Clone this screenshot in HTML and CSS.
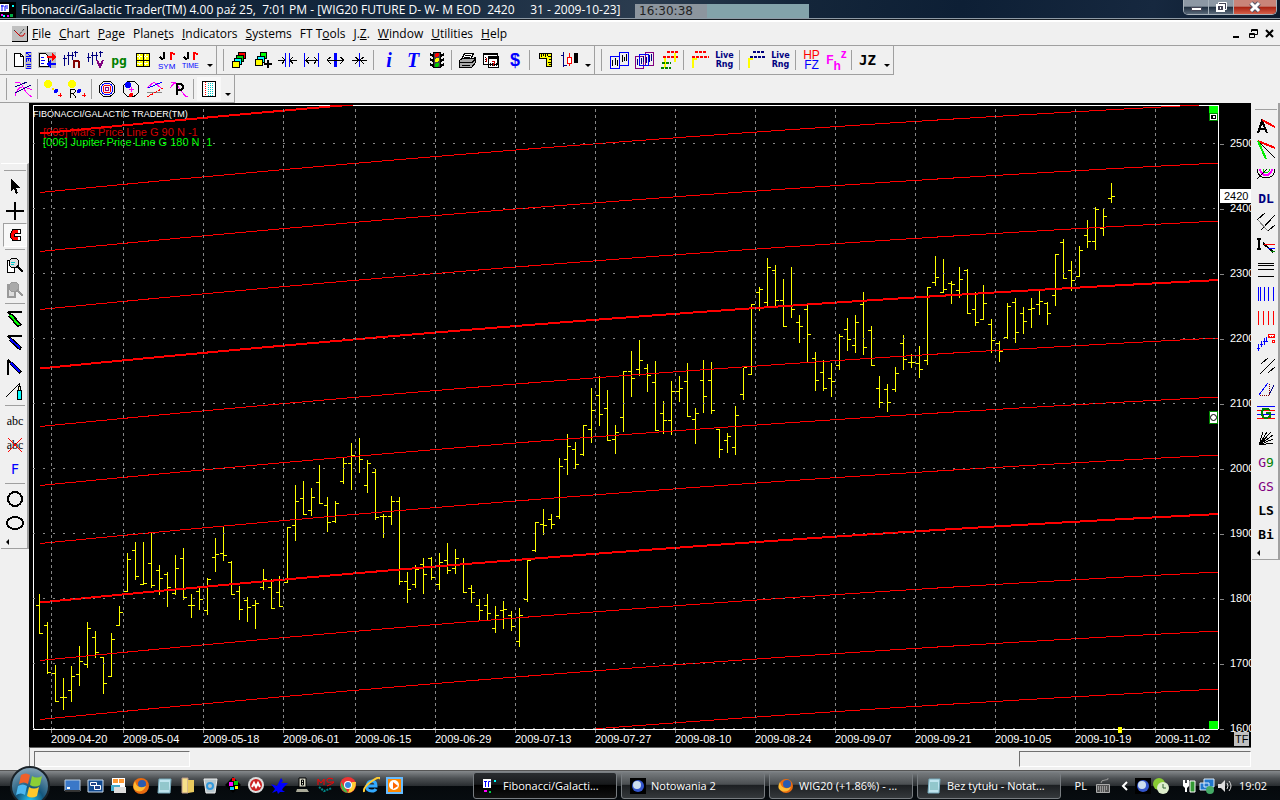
FILE: index.html
```html
<!DOCTYPE html>
<html lang="en">
<head>
  <meta charset="UTF-8" />
  <meta name="viewport" content="width=device-width, initial-scale=1.0"/>
  <title>Fibonacci/Galactic Trader(TM) 4.00</title>
  <link rel="stylesheet" href="styles.css">
</head>
<body>

<header class="titlebar">
  <svg class="app-icon" viewBox="0 0 16 16"><path fill="#000" d="M0 0h16v16H0z"/><path fill="#fff" d="M0 2h9v8H0z"/><path d="M1 4h3M2 3v6M5 9V4h3M6 6h2" stroke="#00f" stroke-width="1" fill="none"/><path fill="#0ff" d="M12 3h2v2h-2zM3 13h2v2H3z"/><path fill="#f0f" d="M1 12h2v2H1zM7 13h2v2H7z"/><path fill="#0a4" d="M10 12h3v3h-3z"/></svg>
  <h1>Fibonacci/Galactic Trader(TM) 4.00 paź 25,&nbsp; 7:01 PM - [WIG20 FUTURE D- W- M EOD&nbsp; 2420 &nbsp; &nbsp; 31 - 2009-10-23]</h1>
  <span class="timer">16:30:38</span>
  <div class="window-buttons">
    <button aria-label="Minimize"><svg viewBox="0 0 16 14"><path fill="#fff" stroke="#445" d="M3.500 7.500h10v3h-10z"/></svg></button>
    <button aria-label="Restore"><svg viewBox="0 0 16 14"><path fill="#445" stroke="#fff" d="M5.500 2.500h8v7h-8z"/><path fill="#445" stroke="#fff" stroke-width="2" d="M4 5h7v6H4z"/><path fill="#fff" d="M7 7h1v2H7z"/></svg></button>
    <button class="close" aria-label="Close"><svg viewBox="0 0 16 14"><path stroke="#556" stroke-width="5" d="M4 3l8 8M12 3l-8 8"/><path stroke="#fff" stroke-width="3" d="M4 3l8 8M12 3l-8 8"/></svg></button>
  </div>
</header>

<nav class="menubar">
  <svg class="doc-icon" viewBox="0 0 16 16"><path fill="#c0c0c0" d="M0 0h16v16H0z"/><path d="M0 15.500h15.500V0" stroke="#000" fill="none"/><path d="M2 4l5 5 5-6" stroke="#000" fill="none" stroke-dasharray="1 1"/><path d="M3 5l5 5 3 0 2 -3" stroke="#c00" fill="none"/></svg>
  <a href="#"><u>F</u>ile</a>
  <a href="#"><u>C</u>hart</a>
  <a href="#"><u>P</u>age</a>
  <a href="#">Plane<u>t</u>s</a>
  <a href="#"><u>I</u>ndicators</a>
  <a href="#"><u>S</u>ystems</a>
  <a href="#">FT T<u>o</u>ols</a>
  <a href="#">J.<u>Z</u>.</a>
  <a href="#"><u>W</u>indow</a>
  <a href="#"><u>U</u>tilities</a>
  <a href="#"><u>H</u>elp</a>
  <div class="child-buttons">
    <button aria-label="Minimize chart"><svg viewBox="0 0 10 10"><path fill="#000" d="M2 7h6v2H2z"/></svg></button>
    <button aria-label="Restore chart"><svg viewBox="0 0 10 10"><path fill="none" stroke="#000" d="M3.500 3V.5h6v5H7M1.500 4.500h5v4h-5zM3 1.500h6M1 5.500h6"/></svg></button>
    <button aria-label="Close chart"><svg viewBox="0 0 10 10"><path stroke="#000" stroke-width="2" d="M1 1l7 7M8 1L1 8"/></svg></button>
  </div>
</nav>

<div class="toolbars">
  <div class="toolbar">
    <button aria-label="New chart"><svg viewBox="0 0 20 20"><path fill="#c0c0c0" d="M12 2h7v17h-7z"/><path d="M1.500 3.500h6l3 3v10h-9zM7.500 3.500v3h3" fill="#fff" stroke="#000"/><path d="M13 6.500h5M13 2.500h5M13 3l5 3M13.500 8v4M15.500 8v3M17.500 8v4M13 8.500h5M13 14.500h5M13 18.500h5M14 16.500h4" fill="none" stroke="#00f"/></svg></button>
    <button aria-label="Replace chart"><svg viewBox="0 0 20 20"><path fill="#c0c0c0" d="M1 2h18v16H1z"/><path d="M2.500 3.500h6l3 3v10h-9z" fill="#fff" stroke="#000"/><path d="M4 7.500h3M4 10.500h4M4 13.500h3" stroke="#00f"/><path fill="red" d="M10 6h5V3l5 4-5 4V8h-5z"/><path fill="#00f" d="M19 13h-5v-3l-5 4 5 4v-3h5z"/></svg></button>
    <button aria-label="Bars n"><svg viewBox="0 0 20 20"><path d="M3.500 5v11M2 8.500h4M7.500 2v13M6 5.500h4M11.500 2v8M10 5.500h3M14.500 1v6M13 2.500h4" stroke="#000080" fill="none"/><path d="M13 18v-8M13 11h4q1 0 1 2v5" stroke="#800000" stroke-width="2" fill="none"/></svg></button>
    <button aria-label="Bars v"><svg viewBox="0 0 20 20"><path d="M3.500 3v9M2 7.500h4M7.500 2v13M6 5.500h4M11.500 2v8M10 5.500h3M15.500 1v6M14 2.500h4" stroke="#000080" fill="none"/><path d="M12 10l3 7 3-7" stroke="#800080" stroke-width="2" fill="none"/></svg></button>
    <button class="glyph pg">pg</button>
    <button aria-label="Grid"><svg viewBox="0 0 20 20"><path fill="#ff0" stroke="#000" d="M3.500 3.500h13v13h-13z"/><path stroke="#fff" stroke-dasharray="2 1" d="M6.500 4v12M12.500 4v12M4 6.500h12M4 13.500h12"/><path stroke="#000" d="M10.500 4v12M4 10.500h12"/></svg></button>
    <button aria-label="Symbol"><svg viewBox="0 0 20 20"><path d="M7 2v7M3 7l3 3" stroke="#000" stroke-width="2"/><path d="M14 10V3l4 1" stroke="red" stroke-width="2" fill="none"/><text x="1" y="19" fill="#00f">SYM</text></svg></button>
    <button aria-label="Time"><svg viewBox="0 0 20 20"><path d="M7 2v7M3 7l3 3" stroke="#000" stroke-width="2"/><path d="M13 10V3l4 1" stroke="red" stroke-width="2" fill="none"/><text x="1" y="18" fill="#00f" class="tiny">TIME</text></svg></button>
    <button class="more" aria-label="More"></button>
  </div>

  <div class="toolbar">
    <button aria-label="Stack"><svg viewBox="0 0 20 20"><path fill="red" stroke="#000" d="M9.500 2.500h7v6h-7z"/><path fill="#0c0" stroke="#000" d="M7.500 5.500h7v6h-7z"/><path fill="#0ff" stroke="#000" d="M5.500 8.500h7v6h-7z"/><path fill="#ff0" stroke="#000" d="M3.500 11.500h7v6h-7z"/></svg></button>
    <button aria-label="Add to stack"><svg viewBox="0 0 20 20"><path fill="#0f0" stroke="#000" d="M7.500 2.500h6v6h-6z"/><path fill="#0ff" stroke="#000" d="M4.500 6.500h7v6h-7z"/><path fill="#ff0" stroke="#000" d="M2.500 9.500h7v6h-7z"/><path d="M15 10v8M11 14h8" stroke="#000" stroke-width="2"/></svg></button>
    <button aria-label="Compress"><svg viewBox="0 0 20 20"><path d="M8.500 3v14M12.500 3v14" stroke="#00f"/><path d="M1 10.500h7M5 7l3 3-3 4M20 10.500h-7M16 7l-3 3 3 4" stroke="#000" fill="none"/></svg></button>
    <button aria-label="Expand"><svg viewBox="0 0 20 20"><path d="M3.500 3v14M17.500 3v14" stroke="#00f"/><path d="M4 10.500h13M8 7l-3 3 3 4M13 7l3 3-3 4" stroke="#000" fill="none"/></svg></button>
    <button aria-label="Widen"><svg viewBox="0 0 20 20"><path d="M10 3v14" stroke="#00f" stroke-width="3"/><path d="M2 10.500h17M6 7l-4 3 4 4M15 7l4 3-4 4" stroke="#000" fill="none"/></svg></button>
    <button aria-label="Narrow"><svg viewBox="0 0 20 20"><path d="M10.500 3v14" stroke="#00f"/><path d="M3 10.500h15M6 7l4 3-4 4M15 7l-4 3 4 4" stroke="#000" fill="none"/></svg></button>
    <i class="sep"></i>
    <button class="glyph serif" aria-label="Info">i</button>
    <button class="glyph serif" aria-label="Text">T</button>
    <button aria-label="Traffic light"><svg viewBox="0 0 20 20"><path fill="#444" stroke="#000" d="M6.500 2.500h7v15h-7z"/><path d="M3 4l3 2M17 4l-3 2M3 9l3 2M17 9l-3 2M3 14l3 2M17 14l-3 2" stroke="#000" stroke-width="2"/><circle cx="10" cy="5" r="2" fill="red"/><circle cx="10" cy="10" r="2" fill="#ff0"/><circle cx="10" cy="15" r="2" fill="#0c0"/></svg></button>
    <i class="sep"></i>
    <button aria-label="Print"><svg viewBox="0 0 20 20"><path fill="#fff" stroke="#000" d="M7.500 3.500h9l-3 6h-9z"/><path d="M8 5.500h6M7 7.500h6" stroke="#000"/><path fill="#aaa" stroke="#000" d="M2.500 10.500l3-2h11l2-1v5l-4 5h-12z"/><path d="M3 12.500h12l3-3M5 15.500h8" stroke="#000" fill="none"/></svg></button>
    <button aria-label="Calendar"><svg viewBox="0 0 20 20"><path fill="#fff" stroke="#000" d="M2.500 3.500h14v11h-14zM7.500 6.500h10v11h-10z"/><path d="M2 4h15M7 8h11" stroke="#000" stroke-width="2"/><path d="M4.500 7v6M9 15.500h7M9 13.500h7" stroke="#000" stroke-dasharray="1 1"/><path d="M5 8v4M11 11h3l-2 5" stroke="#c00" fill="none"/></svg></button>
    <button class="glyph dollar">$</button>
    <i class="sep"></i>
    <button aria-label="Ruler"><svg viewBox="0 0 20 20"><path fill="#ff0" stroke="#000" d="M4.500 3.500h12v13h-5v-8h-7z"/><path d="M6.500 4v3M8.500 4v2M10.500 4v3M12.500 4v2M16 6.500h-3M16 9.500h-2M16 12.500h-3M16 14.500h-2" stroke="#000"/></svg></button>
    <button aria-label="Candles"><svg viewBox="0 0 20 20"><path d="M4.500 2v15M2 5.500h3M5 15.500h3" stroke="#000080"/><path d="M10.500 3v13" stroke="red"/><path fill="#fff" stroke="red" d="M8.500 7.500h4v6h-4z"/><path fill="#000" d="M15 3h4v10h-4z"/></svg></button>
    <button class="more" aria-label="More"></button>
  </div>

  <div class="toolbar wide">
    <button aria-label="Two charts"><svg viewBox="0 0 20 20"><path fill="none" stroke="#00f" d="M1.500 6.500h9v12h-9zM10.500 2.500h9v13h-9z"/><path d="M3.500 10v6M6.500 8v7M8.500 10v6M13.500 5v7M15.500 7v4M17.500 4v7" stroke="#000"/></svg></button>
    <button aria-label="Three charts"><svg viewBox="0 0 20 20"><path fill="none" stroke="#800080" d="M1.500 6.500h8v12h-8zM11.500 2.500h8v13h-8z"/><path fill="none" stroke="#00f" d="M5.500 4.500h9v11h-9z"/><path d="M3.500 9v6M7.500 8v6M9.500 6v6M12.500 7v6M15.500 5v7M17.500 4v7" stroke="#000080"/></svg></button>
    <button aria-label="Levels"><svg viewBox="0 0 20 20"><path d="M8 2h11M4 7h15" stroke="red" stroke-width="2" stroke-dasharray="3 1"/><path d="M16 3v9M6 8v10" stroke="#ff0" stroke-width="2"/><path d="M3 13h9M2 18h10" stroke="green" stroke-width="2" stroke-dasharray="3 1"/></svg></button>
    <i class="sep"></i>
    <button aria-label="Red levels"><svg viewBox="0 0 20 20"><path d="M5 2h12M2 7h17" stroke="red" stroke-width="2" stroke-dasharray="3 1"/><path d="M3 18V9h4" stroke="#ff0" stroke-width="2" fill="none"/></svg></button>
    <button class="glyph live">Live<br>Rng</button>
    <i class="sep"></i>
    <button aria-label="Blue levels"><svg viewBox="0 0 20 20"><path d="M7 2h12M4 7h15" stroke="#000080" stroke-width="2" stroke-dasharray="3 1"/><path d="M3 18V9h4" stroke="#ff0" stroke-width="2" fill="none"/></svg></button>
    <button class="glyph live">Live<br>Rng</button>
    <i class="sep"></i>
    <button class="glyph hpfz"><span>HP</span>FZ</button>
    <button class="glyph fhz">F<sub>h</sub><sup>z</sup></button>
    <i class="sep"></i>
    <button class="glyph jz">JZ</button>
    <button class="more" aria-label="More"></button>
  </div>
</div>

<div class="toolbars second">
  <div class="toolbar">
    <button aria-label="Planet lines"><svg viewBox="0 0 20 20"><path d="M2 4q5-3 8 4t9 10M2 17q3-10 8-9t9 3" stroke="#f0f" fill="none"/><path d="M2 8l12-5M2 14l16-8" stroke="#000080"/></svg></button>
    <i class="sep"></i>
    <button aria-label="Sun planets"><svg viewBox="0 0 20 20"><circle cx="5" cy="5" r="4" fill="#ff0"/><circle cx="10" cy="10" r="1" fill="#fd0"/><circle cx="13" cy="12" r="2" fill="#00f"/><path d="M17.500 14v4M15 16.500h4" stroke="red"/></svg></button>
    <button aria-label="Retrograde"><svg viewBox="0 0 20 20"><circle cx="5" cy="5" r="4" fill="#ff0"/><circle cx="12" cy="12" r="2" fill="#00f"/><path d="M17.500 14v4M15 16.500h4" stroke="red"/><path d="M3 19V10h4q3 2 0 4H3M6 14l3 5" stroke="#000" fill="none"/></svg></button>
    <i class="sep"></i>
    <button aria-label="Orbits"><svg viewBox="0 0 20 20"><g fill="none"><circle cx="10" cy="10" r="8" stroke="#000"/><circle cx="10" cy="10" r="6" stroke="#00f"/><circle cx="10" cy="10" r="4" stroke="red"/><circle cx="10" cy="10" r="2" stroke="#808"/></g></svg></button>
    <button aria-label="Wheel"><svg viewBox="0 0 20 20"><circle cx="10" cy="10" r="8" fill="#f0f0f0" stroke="#000"/><circle cx="7" cy="6" r="3" fill="#00f"/><circle cx="10" cy="16" r="2" fill="red"/><path d="M10.500 8v5M8 10.500h5" stroke="#f0f"/></svg></button>
    <button aria-label="Aspects"><svg viewBox="0 0 20 20"><path d="M2 9l7-6 7 6" stroke="#f0f" fill="none"/><path d="M3 9l14-6" stroke="#00f"/><path d="M2 13h15" stroke="#888"/><path d="M2 18l9-5 7-4" stroke="red" stroke-dasharray="3 1"/></svg></button>
    <button aria-label="Planet path"><svg viewBox="0 0 20 20"><path d="M1 9l5-6 4 6 4 5q3 5 5 3M2 3l8 3" stroke="#f0f" fill="none"/><path d="M8 16V5h4q4 3 0 6H8" stroke="#000" stroke-width="2" fill="none"/></svg></button>
    <i class="sep"></i>
    <button class="pressed" aria-label="Ephemeris"><svg viewBox="0 0 20 20"><path fill="#fff" stroke="#000" d="M3.500 2.500h13v15h-13z"/><path d="M6.500 3v14" stroke="red" stroke-dasharray="1 1"/><path d="M9.500 4v13M11.500 4v13M13.500 4v13" stroke="#0cc" stroke-dasharray="1 1"/></svg></button>
    <button class="more" aria-label="More"></button>
  </div>
</div>

<main>
  <aside class="dock left">
    <button aria-label="Pointer"><svg viewBox="0 0 20 20"><path fill="#000" d="M6 2v12l3-3 2 6 2-1-2-5h4z"/></svg></button>
    <button aria-label="Crosshair"><svg viewBox="0 0 20 20"><path d="M10 1v18M1 10h18" stroke="#000" stroke-width="2"/></svg></button>
    <button class="pressed" aria-label="Magnet"><svg viewBox="0 0 20 20"><path d="M16 6.500H9q-3 4 0 7h7" fill="none" stroke="#000" stroke-width="5"/><path d="M13 6.500H9q-3 4 0 7h4" fill="none" stroke="red" stroke-width="3"/><path d="M13 6.500h2M13 13.500h2" stroke="#fff" stroke-width="3"/></svg></button>
    <i class="sep"></i>
    <button aria-label="Zoom in"><svg viewBox="0 0 20 20"><path fill="#fff" stroke="#000" d="M2.500 5.500h7v12h-7z"/><circle cx="9" cy="8" r="5" fill="#ddd" stroke="#000"/><path d="M6 7.500h4M6 9.500h3" stroke="#0cc"/><path d="M12 11l6 6" stroke="#000" stroke-width="2"/></svg></button>
    <button aria-label="Zoom out" disabled><svg viewBox="0 0 20 20"><path fill="#ddd" stroke="#999" stroke-width="2" d="M2.500 5.500h7v12h-7z"/><circle cx="9" cy="8" r="5" fill="#aaa" stroke="#999"/><path d="M12 11l6 6" stroke="#999" stroke-width="2"/></svg></button>
    <i class="sep"></i>
    <button aria-label="Green line"><svg viewBox="0 0 20 20"><path d="M3 3h14M3 3l12 13" stroke="#000" stroke-width="2"/><path d="M5 6l10 11" stroke="#000" stroke-width="5"/><path d="M5 6l9 10" stroke="#0f0" stroke-width="2"/></svg></button>
    <button aria-label="Blue line"><svg viewBox="0 0 20 20"><path d="M3 3h14M3 3l12 13" stroke="#000" stroke-width="2"/><path d="M5 6l11 10" stroke="#000" stroke-width="4"/><path d="M5 6l10 9" stroke="#00f" stroke-width="2"/></svg></button>
    <button aria-label="Vertical line"><svg viewBox="0 0 20 20"><path d="M3 3v15M3 3l12 12" stroke="#000" stroke-width="2"/><path d="M6 6l10 10" stroke="#000" stroke-width="4"/><path d="M6 6l9 9" stroke="#00f" stroke-width="2"/></svg></button>
    <button aria-label="Marker"><svg viewBox="0 0 20 20"><path d="M1 16L14 3v6" stroke="#000" fill="none"/><path fill="#0ff" stroke="#000" d="M12.500 9.500h4v9h-4z"/><path fill="#ffc" stroke="#000" d="M13.500 5.500h2v4h-2z"/></svg></button>
    <i class="sep"></i>
    <button class="glyph abc">abc</button>
    <button class="glyph abc crossed">abc<svg viewBox="0 0 20 20"><path d="M3 3l14 14M17 3L3 17" stroke="red"/></svg></button>
    <button class="glyph letter-f">F</button>
    <i class="sep"></i>
    <button aria-label="Circle"><svg viewBox="0 0 20 20"><circle cx="10" cy="10" r="7" fill="none" stroke="#000" stroke-width="2"/></svg></button>
    <button aria-label="Ellipse"><svg viewBox="0 0 20 20"><ellipse cx="10" cy="10" rx="8" ry="6" fill="none" stroke="#000" stroke-width="2"/></svg></button>
    <button class="more" aria-label="More"></button>
  </aside>

  <div class="workspace">
    <svg id="chart" role="img" aria-label="WIG20 FUTURE daily chart"></svg>
    <footer class="statusbar">
      <div class="field short"></div>
      <div class="field long"></div>
    </footer>
  </div>

  <aside class="dock right">
    <button aria-label="Angle A"><svg viewBox="0 0 20 20"><path d="M2 17l4-12 5 12M4 13h6" stroke="#000" stroke-width="2" fill="none"/><path d="M6 4l13 7" stroke="red" stroke-width="2"/></svg></button>
    <button aria-label="Fan"><svg viewBox="0 0 20 20"><path d="M2 1l17 7" stroke="red" stroke-width="2"/><path d="M2 1l17 17" stroke="#000"/><path d="M2 1l8 18" stroke="#0e0" stroke-width="2"/></svg></button>
    <button aria-label="Arcs"><svg viewBox="0 0 20 20"><g fill="none"><path d="M1 5q1 9 9 9t9-9" stroke="#000"/><path d="M4 5q1 6 6 6t6-6" stroke="#f0f" stroke-width="2"/><path d="M7 5q1 4 3 4t4-4" stroke="#0c0"/></g><path d="M1 15L11 5" stroke="#000"/></svg></button>
    <button class="glyph dl">DL</button>
    <button aria-label="Pitchfork"><svg viewBox="0 0 20 20"><path d="M1 8l8-7M5 18L19 3M12 19l7-6" stroke="#000"/><path d="M2 8l10 11" stroke="#888"/></svg></button>
    <button aria-label="I fan"><svg viewBox="0 0 20 20"><path d="M1 3h4M3 3v10M1 13h4M7 7l10 9" stroke="#000" stroke-width="2"/><path d="M8 8.500h11" stroke="red"/><path d="M12 12.500h7" stroke="#00f"/><path d="M15 15.500h4" stroke="#080"/></svg></button>
    <button aria-label="Horizontal lines"><svg viewBox="0 0 20 20"><path d="M2 3.500h16M2 5.500h16M2 9.500h16M2 16.500h16" stroke="#000"/></svg></button>
    <button aria-label="Blue cycles"><svg viewBox="0 0 20 20"><path d="M2.500 3v14M4.500 3v14M8.500 3v14M12.500 3v14M17.500 3v14" stroke="#00f"/></svg></button>
    <button aria-label="Red cycles"><svg viewBox="0 0 20 20"><path d="M2.500 3v14M7.500 3v14M12.500 3v14M17.500 3v14" stroke="red"/></svg></button>
    <button aria-label="Swing"><svg viewBox="0 0 20 20"><path d="M2.500 12v7M5.500 9v6M8.500 6v7M10.500 5v5M1 16.500h3M4 12.500h3M7 9.500h5" stroke="#00f"/><path fill="#fff" stroke="red" d="M12.500 2.500h6v3h-6zM16.500 8.500h2v2h-2z"/><path stroke="red" d="M13 4h5" stroke-dasharray="1 1"/></svg></button>
    <button aria-label="Parallel lines"><svg viewBox="0 0 20 20"><path d="M5 8l7-6M4 18L19 3M12 17l7-6" stroke="#000"/></svg></button>
    <button aria-label="Triangle"><svg viewBox="0 0 20 20"><path d="M3 15L12 3" stroke="#00f"/><path d="M13 15l5-10" stroke="#000080"/><path d="M4 15.500h9V3" stroke="#800000" stroke-dasharray="1 1" fill="none"/></svg></button>
    <button aria-label="G levels"><svg viewBox="0 0 20 20"><path d="M1 2.500h18M1 10.500h18" stroke="#00f"/><path d="M1 6.500h18M1 14.500h18" stroke="red"/><path d="M14 6q-8-4-8 3t8 4v-4h-4" stroke="green" stroke-width="2" fill="none"/></svg></button>
    <button aria-label="Rays"><svg viewBox="0 0 20 20"><path d="M3 17L7 4M3 17l8-13M3 17L15 4M3 17L17 7M3 17l14-6M3 17l14-2" stroke="#000"/></svg></button>
    <button class="glyph g9">G<span>9</span></button>
    <button class="glyph g9">GS</button>
    <button class="glyph ls">LS</button>
    <button class="glyph ls">Bi</button>
    <button class="more" aria-label="More"></button>
  </aside>
</main>

<div class="taskbar">
  <button class="start" aria-label="Start"><svg viewBox="0 0 40 40"><defs><radialGradient id="orb" cx="50%" cy="90%" r="90%"><stop offset="0" stop-color="#1fc8f8"/><stop offset=".4" stop-color="#14567c"/><stop offset="1" stop-color="#8aa6b8"/></radialGradient></defs><circle cx="20" cy="20" r="19" fill="url(#orb)" stroke="#1a2228" stroke-width="2"/><path fill="#f0602a" d="M11 9q5-3 9 0l-2 9q-4-3-9 0z"/><path fill="#8ccf35" d="M22 10q5 3 10 0l-2 9q-5 3-10 0z"/><path fill="#4db8f0" d="M8 20q5-3 9 0l-2 9q-4-3-9 0z"/><path fill="#fdc82c" d="M19 21q5 3 10 0l-2 9q-5 3-10 0z"/></svg></button>

  <div class="quick">
    <a href="#" aria-label="Show desktop"><svg viewBox="0 0 17 17"><path fill="#3b78c8" stroke="#bcd" d="M1 3h15v11H1z"/><path fill="#fff" d="M3 10h3v2H3z"/><path fill="#333" d="M1 13h15v2H1z"/></svg></a>
    <a href="#" aria-label="Switch windows"><svg viewBox="0 0 17 17"><path fill="#124a90" stroke="#cde" d="M1 3h15v12H1z"/><path fill="#248" stroke="#fff" d="M3.500 5.500h6v3h-6zM7.500 8.500h6v4h-6z"/></svg></a>
    <a href="#" aria-label="Mail"><svg viewBox="0 0 17 17"><path fill="#fff" d="M2 1h13v10H2z"/><path fill="#f93" d="M3 2h5v4H3zM9 2h5v4H9z"/><path fill="#4ac" d="M1 8h9v6H1z"/><path fill="#ddd" d="M4 10h12v6H4z"/></svg></a>
    <a href="#" aria-label="Firefox"><svg viewBox="0 0 17 17"><circle cx="8" cy="9" r="8" fill="#e86a10"/><circle cx="9" cy="7" r="4" fill="#2a5bb0"/><path fill="#fb3" d="M2 4q2 9 11 5-3 7-9 5T2 4"/></svg></a>
    <a href="#" aria-label="Notepad"><svg viewBox="0 0 17 17"><path fill="#bfe4ee" stroke="#7ab" d="M3 2h12l-1 14H2z"/><path d="M4 6h9M4 8h9M4 10h9M4 12h9" stroke="#6aa"/></svg></a>
    <a href="#" aria-label="Folder"><svg viewBox="0 0 17 17"><path fill="#f7e08a" stroke="#b98" d="M3 1h6v15H3z"/><path fill="#e9c95e" d="M9 3h6v12l-6 1z"/></svg></a>
    <a href="#" aria-label="Recycle bin"><svg viewBox="0 0 17 17"><path fill="#b8c6cc" stroke="#eee" d="M2 2h13l-2 14H4z"/><circle cx="8" cy="9" r="3" fill="none" stroke="#39d" stroke-width="2"/></svg></a>
    <a href="#" aria-label="Colors"><svg viewBox="0 0 17 17"><path fill="#000" d="M8 0l8 8-8 8-8-8z"/><path fill="#f0f" d="M4 5h4v4H4z"/><path fill="#0c0" d="M9 4h4v4H9z"/><path fill="red" d="M7 1h3v3H7z"/><path fill="#0cf" d="M5 10h4v3H5z"/><path fill="#ff0" d="M10 9h3v3h-3z"/></svg></a>
    <a href="#" aria-label="Media"><svg viewBox="0 0 17 17"><circle cx="8" cy="8" r="8" fill="#ddd"/><circle cx="8" cy="8" r="6" fill="#c22"/><path d="M4 10l2-4 2 4 2-4 2 4" stroke="#fff" fill="none" stroke-width="2"/></svg></a>
    <a href="#" aria-label="Bird"><svg viewBox="0 0 17 17"><path fill="#00f" d="M10 1l2 3-2 2 7 0-5 5-1 2 3 2-5 0-2 2-1-3-5 2 3-4-4-5 6 2z"/></svg></a>
    <a href="#" aria-label="Trader"><svg viewBox="0 0 17 17"><path fill="#ddc" stroke="#000" d="M5 1h7v9H5z"/><path d="M7.500 3v5h2v-5zM7 5.500h3" stroke="#000" fill="none"/><path fill="#aa9" d="M3 12h10l2 3H2z"/></svg></a>
    <a href="#" aria-label="MetaStock"><svg viewBox="0 0 17 17"><path d="M1 8V2l3 4 3-4v6M16 2q-5-2-6 1t5 2-5 4" stroke="red" stroke-width="1" fill="none"/><path d="M2 10l5 4 8-3" stroke="#088" stroke-width="2" stroke-dasharray="2 1" fill="none"/></svg></a>
    <a href="#" aria-label="Chrome"><svg viewBox="0 0 17 17"><circle cx="8" cy="8" r="8" fill="#e33"/><path fill="#4b4" d="M1 5l7 11Q0 15 1 5"/><path fill="#fc3" d="M8 16l4-11h4q0 10-8 11"/><circle cx="8" cy="8" r="4" fill="#fff"/><circle cx="8" cy="8" r="3" fill="#38d"/></svg></a>
    <a href="#" aria-label="Internet Explorer"><svg viewBox="0 0 17 17"><path d="M4 9h9q0-5-4-5T4 9t5 5q3 0 4-2" stroke="#3af" stroke-width="3" fill="none"/><path d="M1 15Q0 10 9 4t7-2" stroke="#fc3" stroke-width="2" fill="none"/></svg></a>
    <a href="#" aria-label="Media player"><svg viewBox="0 0 17 17"><path fill="#f80" stroke="#6bf" stroke-width="2" d="M1 1h15v15H1z"/><circle cx="8" cy="8" r="5" fill="#fff"/><path fill="#f60" d="M7 5l5 4-5 3z"/></svg></a>
  </div>

  <div class="tasks">
    <button class="active"><svg viewBox="0 0 16 16"><path fill="#fff" d="M1 1h8v9H1z"/><path d="M2 3.500h3M3.500 3v6M6.500 9V3.500h2" stroke="#00f" fill="none"/><path fill="#0ff" d="M12 2h2v2h-2z"/><path fill="#f0f" d="M2 12h3v2H2z"/><path fill="#0c4" d="M7 13h2v2H7z"/></svg>Fibonacci/Galacti...</button>
    <button><svg viewBox="0 0 16 16"><path fill="#000" d="M0 0h16v16H0z"/><circle cx="8" cy="8" r="6" fill="#35c"/><circle cx="7" cy="7" r="4" fill="#cde"/></svg>Notowania 2</button>
    <button><svg viewBox="0 0 16 16"><circle cx="8" cy="8" r="7" fill="#e86a10"/><circle cx="9" cy="6" r="4" fill="#2a5bb0"/><path fill="#fb3" d="M2 4q2 9 11 5-3 6-9 4T2 4"/></svg>WIG20 (+1.86%) - ...</button>
    <button><svg viewBox="0 0 16 16"><path fill="#bfe4ee" stroke="#7ab" d="M3 1h11l-1 14H2z"/><path d="M4 5h8M4 7h8M4 9h8M4 11h8" stroke="#6aa"/></svg>Bez tytułu - Notat...</button>
  </div>

  <div class="tray">
    <span>PL</span>
    <svg class="kbd" viewBox="0 0 16 16"><path d="M6 5q0-3 4-3t3-2" stroke="#999" fill="none"/><path fill="#555" stroke="#aaa" d="M1.500 6.500h13v8h-13z"/><path d="M3 9h10M3 11h10M5 13h6" stroke="#ddd" stroke-dasharray="1 1"/></svg>
    <svg class="chevron" viewBox="0 0 16 16"><path d="M10 4L6 8l4 4" stroke="#fff" stroke-width="2" fill="none"/></svg>
    <svg viewBox="0 0 16 16"><path fill="#000" d="M0 0h16v16H0z"/><circle cx="8" cy="8" r="6" fill="#35c"/><circle cx="7" cy="7" r="4" fill="#cde"/></svg>
    <svg viewBox="0 0 16 16"><circle cx="6" cy="6" r="6" fill="#8c3"/><circle cx="10" cy="10" r="6" fill="#dec"/><path d="M10 6v4h3" stroke="#363" fill="none"/></svg>
    <svg class="power" viewBox="0 0 16 16"><path fill="#fff" d="M2 2h2v3h2V2h2v6L6 10v4H4v-4L2 8z"/><path fill="#393" stroke="#fff" d="M9 3h5v11H9z"/></svg>
    <svg viewBox="0 0 16 16"><path fill="#27c" stroke="#def" d="M5 1h10v8H5zM1 5h9v7H1z"/><circle cx="11" cy="12" r="4" fill="#4a6"/></svg>
    <svg viewBox="0 0 16 16"><path fill="#ddd" d="M1 6h3l4-4v12l-4-4H1z"/><path d="M10 5q2 3 0 6M12 3q4 5 0 10" stroke="#ddd" fill="none"/></svg>
    <time>19:02</time>
  </div>
</div>

<script src="chart.js"></script>
</body>
</html>
```
FILE: styles.css
```css
* {
  box-sizing: border-box;
}

body {
  font-family: "Open Sans", "Noto Sans", sans-serif;
  font-size: 12px;
  margin: 0;
  height: 100vh;
  display: flex;
  flex-direction: column;
  background: #f0f0f0;
  color: #000;
  overflow: hidden;
}

button {
  font: inherit;
  color: inherit;
  background: none;
  border: none;
  padding: 0;
}

svg {
  flex: none;
  display: block;
}

/* title bar */
.titlebar {
  display: flex;
  align-items: center;
  height: 20px;
  flex: none;
  background: linear-gradient(100deg, #0d1e31 0, #14283e 30%, #2b3c4f 50%, #14263a 62%, #0d1f35 75%, #16283f 90%, #0b1a2c 100%);
  border-bottom: 1px solid #1a2026;
  box-shadow: inset 0 -1px #8e9aa5;
  color: #fff;
}

.app-icon {
  width: 16px;
  height: 16px;
}

.titlebar h1 {
  margin: 0 0 0 5px;
  font-size: 12px;
  font-weight: normal;
  line-height: 18px;
  width: 614px;
  white-space: nowrap;
}

.timer {
  width: 174px;
  height: 14px;
  margin-top: 3px;
  padding-left: 4px;
  font: 12px/14px "DejaVu Sans", sans-serif;
  color: #222;
  background: linear-gradient(90deg, #8c959e 72px, #83a3aa 72px);
}

.window-buttons {
  display: flex;
  align-self: flex-start;
  margin: 0 3px 0 auto;
  border: 1px solid #a8b2ba;
  border-top: none;
  border-radius: 0 0 5px 5px;
  overflow: hidden;
}

.window-buttons button {
  width: 25px;
  height: 14px;
  display: flex;
  justify-content: center;
  background: linear-gradient(#8d98a4 45%, #1d2c3d 50%, #5b6a7a);
  border-right: 1px solid #a8b2ba;
}

.window-buttons .close {
  width: 42px;
  border: none;
  background: linear-gradient(#c98479 45%, #a82010 50%, #d4604a);
}

.window-buttons svg {
  width: 16px;
  height: 14px;
}

/* menu */
.menubar {
  display: flex;
  align-items: center;
  height: 26px;
  flex: none;
  padding-left: 12px;
  border-top: 2px solid #fff;
  border-bottom: 1px solid #a0a0a0;
}

.doc-icon {
  width: 16px;
  height: 16px;
}

.menubar a {
  color: #000;
  text-decoration: none;
  padding: 0 4px;
}

.child-buttons {
  display: flex;
  gap: 7px;
  margin: 0 5px 0 auto;
}

.child-buttons svg {
  width: 10px;
  height: 10px;
}

/* toolbars */
.toolbars {
  display: flex;
  flex: none;
}

.toolbar {
  display: flex;
  align-items: center;
  height: 29px;
  padding-left: 10px;
  border-right: 1px solid #a0a0a0;
  border-bottom: 1px solid #a0a0a0;
  background: linear-gradient(#a0a0a0, #a0a0a0) 6px 3px / 1px 22px no-repeat;
}

.toolbar:first-child {
  padding-left: 11px;
}

.second .toolbar {
  height: 28px;
}

.toolbar button,
.dock button {
  width: 24px;
  height: 24px;
  flex: none;
  display: flex;
  align-items: center;
  justify-content: center;
}

.toolbar.wide {
  padding-left: 11px;
}

.toolbar.wide button {
  width: 25px;
}

.toolbar svg,
.dock svg {
  width: 20px;
  height: 20px;
  shape-rendering: crispEdges;
}

.toolbar text {
  font: 8px "Liberation Sans", sans-serif;
}

.toolbar .tiny {
  font-size: 7px;
}

.sep {
  flex: none;
  width: 6px;
  height: 20px;
  background: linear-gradient(#a0a0a0, #a0a0a0) 2px 0 / 1px 100% no-repeat;
}

.toolbar .more,
.toolbar.wide .more {
  width: 13px;
}

.more::after {
  content: "";
  border: 3px solid transparent;
  border-top-color: #000;
  margin-top: 14px;
}

.pressed {
  background: #f8f8f8;
}

.toolbar .glyph,
.dock .glyph {
  font-family: "Liberation Sans", sans-serif;
  font-weight: bold;
  line-height: 1;
}

.toolbar .pg {
  font: bold 13px/13px "DejaVu Sans Mono", monospace;
  color: #008000;
}

.toolbar .serif {
  font: italic bold 20px/20px "Liberation Serif", serif;
  color: #00f;
}

.toolbar .dollar {
  font-size: 18px;
  color: #00f;
}

.toolbar .live {
  font: bold 8px/9px "DejaVu Sans", sans-serif;
  color: #000080;
}

.toolbar .hpfz {
  flex-direction: column;
  font-size: 12px;
  font-weight: normal;
  line-height: 10px;
  color: #00f;
}

.hpfz span {
  color: red;
}

.toolbar .fhz {
  font-size: 12px;
  color: #f0f;
}

.fhz sup,
.fhz sub {
  font-size: 12px;
  line-height: 12px;
}

.fhz sup {
  align-self: flex-start;
}

.fhz sub {
  align-self: flex-end;
}

.toolbar .jz {
  font: bold 14px/14px "DejaVu Sans Mono", monospace;
}

/* chart with a dock on each side */
main {
  flex: 1;
  min-height: 0;
  display: flex;
}

.dock {
  width: 28px;
  flex: none;
  align-self: flex-start;
  display: flex;
  flex-direction: column;
  align-items: center;
  border-right: 2px solid #a0a0a0;
  border-bottom: 1px solid #a0a0a0;
  background: linear-gradient(#a0a0a0, #a0a0a0) 3px 6px / 22px 1px no-repeat;
}

.dock.left {
  margin: 60px 0 0 1px;
  padding: 11px 0 0 2px;
  border-top: 1px solid #fff;
}

.dock.right {
  margin-left: 1px;
  padding: 11px 0 0 2px;
}

.dock .sep {
  width: 20px;
  height: 6px;
  background: linear-gradient(#a0a0a0, #a0a0a0) 0 2px / 100% 1px no-repeat;
}

.dock .more {
  height: 13px;
  justify-content: flex-start;
}

.dock .more::after {
  margin: 0;
  border-top-color: transparent;
  border-right-color: #000;
}

.dock .pressed {
  border: 1px solid #a0a0a0;
  border-right-color: #fff;
  border-bottom-color: #fff;
}

.dock .abc {
  font: 12px/12px "Liberation Serif", serif;
}

.crossed {
  position: relative;
}

.crossed svg {
  position: absolute;
  inset: 2px;
}

.dock .letter-f {
  font: 14px/14px "DejaVu Sans", sans-serif;
  color: #00f;
}

.dock .dl {
  font: bold 13px/13px "DejaVu Sans Mono", monospace;
  color: #000080;
}

.dock .g9 {
  font: 13px/13px "DejaVu Sans Mono", monospace;
  color: #800080;
}

.g9 span {
  color: #008000;
}

.dock .ls {
  font: bold 13px/13px "DejaVu Sans Mono", monospace;
}

.workspace {
  flex: 1;
  min-width: 0;
  display: flex;
  flex-direction: column;
}

#chart {
  flex: 1;
  min-height: 0;
  width: 100%;
  background: #000;
  font: 11px "Liberation Sans", Arial, sans-serif;
  shape-rendering: crispEdges;
}

.statusbar {
  height: 23px;
  flex: none;
  display: flex;
  justify-content: space-between;
  padding: 3px 0 3px 4px;
  border-top: 1px solid #606060;
  border-left: 1px solid #808080;
}

.field {
  border: 1px solid #fff;
  border-top-color: #707070;
  border-left-color: #707070;
}

.short {
  width: 156px;
}

.long {
  width: 232px;
}

/* taskbar */
.taskbar {
  height: 30px;
  flex: none;
  display: flex;
  align-items: center;
  padding-left: 10px;
  border-top: 1px solid #555;
  background: linear-gradient(#85898c 0, #4d5154 25%, #2b2f32 50%, #05090c 52%, #070c10 100%);
  color: #fff;
}

.start svg {
  width: 40px;
  height: 40px;
}

.quick {
  display: flex;
  gap: 6px;
  margin-left: 14px;
}

.quick svg {
  width: 17px;
  height: 17px;
}

.tasks {
  display: flex;
  gap: 4px;
  flex: 1;
  margin-left: 70px;
}

.tasks button {
  display: flex;
  align-items: center;
  gap: 5px;
  flex: 0 1 144px;
  min-width: 0;
  height: 27px;
  padding-left: 8px;
  overflow: hidden;
  white-space: nowrap;
  font-size: 11px;
  border: 1px solid #777c80;
  border-radius: 3px;
  background: linear-gradient(#74787b 0, #4b4f52 45%, #1d2023 50%, #34383b 100%);
}

.tasks .active {
  background: linear-gradient(#2a2d30 0, #17191b 45%, #000 50%, #111 100%);
}

.tasks svg,
.tray svg {
  width: 16px;
  height: 16px;
}

.tray {
  display: flex;
  align-items: center;
  gap: 2px;
  padding-right: 13px;
  font-size: 11px;
}

.tray .kbd {
  margin-left: 6px;
}

.tray .chevron {
  margin-left: 4px;
}

.tray .power {
  margin-left: 10px;
}

.tray time {
  margin-left: 4px;
}
```
FILE: chart.js
```js
// size of the plot that the point data below was recorded in
const PLOT_W = 1186;
const PLOT_H = 624;

// high, low, open, close
const bars = [
  [594,634,605,633],[622,674,625,672],[665,702,673,701],[678,710,697,697],[666,702,690,676],
  [646,686,674,661],[622,668,664,628],[631,658,637,652],[657,694,657,683],[633,677,676,639],
  [606,626,625,612],[553,592,591,559],[542,580,550,576],[542,585,584,583],[533,588,563,585],
  [565,595,570,578],[572,607,574,587],[555,595,593,568],[548,600,558,597],[594,618,605,605],
  [587,610,591,599],[578,615,610,579],[538,572,557,554],[526,561,553,555],[561,595,562,594],
  [586,620,591,609],[597,622,600,607],[600,629,605,603],[569,590,587,579],[579,609,587,608],
  [576,607,592,606],[527,583,582,527],[485,541,525,501],[481,515,498,514],[488,516,510,497],
  [465,504,482,503],[497,532,505,522],[501,523,521,503],[458,484,481,463],[443,490,463,455],
  [438,473,456,459],[460,493,485,463],[469,520,472,517],[514,538,516,516],[496,525,516,501],
  [497,585,501,581],[572,603,581,589],[565,588,584,569],[558,594,564,574],[557,580,558,577],
  [553,590,584,562],[543,574,560,570],[549,574,568,558],[558,593,564,592],[585,603,588,592],
  [599,621,605,610],[594,620,605,613],[606,633,628,615],[601,629,610,609],[611,631,615,626],
  [608,647,641,615],[560,602,599,560],[522,552,550,522],[509,535,524,525],[514,529,519,524],
  [458,519,516,466],[434,475,459,446],[442,469,449,464],[425,456,454,425],[388,443,429,410],
  [376,426,395,414],[390,441,408,440],[425,454,439,432],[371,432,417,371],[351,397,371,378],
  [340,376,369,360],[364,392,368,375],[361,431,382,430],[401,434,413,420],[381,435,420,391],
  [376,402,391,388],[363,417,381,416],[408,444,419,413],[360,413,380,396],[362,414,380,410],
  [429,458,429,449],[433,453,440,436],[406,455,447,415],[368,400,394,367],[304,375,374,304],
  [287,311,292,289],[258,306,302,267],[265,306,270,300],[279,327,300,326],[267,318,306,309],
  [315,343,322,326],[304,362,309,334],[352,391,358,380],[360,391,372,388],[363,397,378,381],
  [334,370,365,336],[318,351,329,339],[315,353,345,322],[292,355,304,347],[326,366,330,365],
  [376,408,388,402],[384,412,389,402],[367,392,389,373],[335,370,343,359],[354,368,362,362],
  [346,378,363,369],[287,365,360,287],[256,286,282,277],[259,293,292,289],[281,304,283,284],
  [267,298,290,279],[269,314,270,313],[292,326,309,322],[285,320,319,303],[319,353,324,340],
  [341,362,343,351],[303,339,337,306],[298,343,302,332],[307,334,313,321],[298,328,309,308],
  [289,315,304,301],[302,325,303,313],[254,306,295,254],[239,279,242,278],[261,291,270,280],
  [246,277,276,250],[220,248,235,241],[207,250,241,209],[208,236,228,216],[183,203,198,196]
];

const dates = [
  [51, '2009-04-20'], [123, '2009-05-04'], [203, '2009-05-18'], [283, '2009-06-01'],
  [355, '2009-06-15'], [435, '2009-06-29'], [515, '2009-07-13'], [595, '2009-07-27'],
  [675, '2009-08-10'], [755, '2009-08-24'], [835, '2009-09-07'], [915, '2009-09-21'],
  [995, '2009-10-05'], [1075, '2009-10-19'], [1155, '2009-11-02']
];

// Mars lines: left end, every fourth one is thick
const planetLines = [133, 192, 251, 309, 368, 426, 485, 543, 602, 660, 719, 777];

function drawChart() {
  const svg = document.getElementById('chart');
  const w = svg.clientWidth;
  const h = svg.clientHeight;
  const plotW = w - 36;
  const plotH = h - 20;
  const X = v => Math.round((v - 33) * plotW / PLOT_W) + 4;
  const Y = v => Math.round((v - 105) * plotH / PLOT_H) + 2;
  const left = X(33), right = X(1218), top = Y(105), bottom = Y(729);
  let out = '';

  const rect = (x, y, rw, rh, fill) =>
    `<rect x="${x}" y="${y}" width="${rw}" height="${rh}" fill="${fill}"/>`;
  const text = (x, y, s, fill) => `<text x="${x}" y="${y}" fill="${fill}">${s}</text>`;

  out += `<clipPath id="plot"><rect x="${left}" y="${top}" width="${right - left}" height="${bottom - top}"/></clipPath>`;

  // frame
  out += rect(left, top, right - left, 1, '#fff') + rect(left, bottom, right - left, 1, '#fff');
  out += rect(left, top, 1, bottom - top, '#fff') + rect(right, top, 1, bottom - top, '#fff');

  // titles
  out += `<text x="${left}" y="14" fill="#fff" font-size="9">FIBONACCI/GALACTIC TRADER(TM)</text>`;
  out += text(left + 10, 33, '[005] Mars Price Line G 90 N -1', '#d00000');
  out += text(left + 10, 43, '[006] Jupiter Price Line G 180 N -1', '#0f0');

  // bars
  let path = '';
  bars.forEach(([high, low, open, close], i) => {
    const x = X(39 + i * 8);
    path += `M${x} ${Y(high)}h1V${Y(low)}h-1zM${x - 3} ${Y(open)}h3v1h-3zM${x + 1} ${Y(close)}h3v1h-3z`;
  });
  out += `<path fill="#ff0" d="${path}"/>`;

  // planet lines bend down a little to the right
  out += '<g clip-path="url(#plot)" fill="none" stroke="#f00">';
  planetLines.forEach((start, i) => {
    const points = [];
    for (let t = 0; t <= 1178; t += 19) {
      points.push(X(40 + t) + ',' + ((start - 105 - 0.0989 * t + 0.0000202 * t * t) * plotH / PLOT_H + 2.5));
    }
    out += `<polyline stroke-width="${i % 4 === 0 ? 2 : 1}" points="${points.join(' ')}"/>`;
  });
  out += '</g>';

  // grid, dates
  dates.forEach(([d, label]) => {
    const x = X(d);
    out += `<path stroke="#868686" stroke-dasharray="3 3" d="M${x + 0.5} ${top + 4}V${bottom}"/>`;
    out += rect(x, bottom + 1, 1, 3, '#868686');
    out += text(x, bottom + 14, label, '#fff');
  });

  // price axis
  for (let i = 0; i < 10; i++) {
    const y = Y(143 + i * 65);
    out += `<path stroke="#868686" stroke-dasharray="2 8" d="M${left} ${y + 0.5}H${right}"/>`;
    out += rect(right + 2, y + 1, 4, 1, '#868686');
    out += text(right + 12, y + 4, 2500 - i * 100, '#fff');
  }
  out += rect(right + 2, Y(189), 31, 14, '#fff') + text(right + 6, Y(189) + 11, '2420', '#000');

  // markers
  out += rect(right - 9, top + 1, 9, 8, '#0f0');
  out += rect(right - 9, top + 8, 9, 8, '#080') + rect(right - 8, top + 9, 7, 6, '#fff');
  out += rect(right - 7, top + 10, 5, 4, '#000') + rect(right - 5, top + 11, 2, 2, '#fff');
  out += rect(right - 9, Y(411), 9, 13, '#080') + rect(right - 8, Y(411) + 1, 7, 11, '#fff');
  out += `<circle cx="${right - 4.5}" cy="${Y(417) + 0.5}" r="3" fill="none" stroke="#000" shape-rendering="auto"/>`;
  out += rect(right - 9, bottom - 8, 9, 8, '#0f0');
  out += rect(X(1118), bottom - 2, 4, 6, '#ff0');
  out += rect(right + 16, bottom + 3, 15, 14, '#c0c0c0') + text(right + 17, bottom + 14, 'TF', '#000');

  svg.innerHTML = out;
}

drawChart();
window.addEventListener('resize', drawChart);
```
